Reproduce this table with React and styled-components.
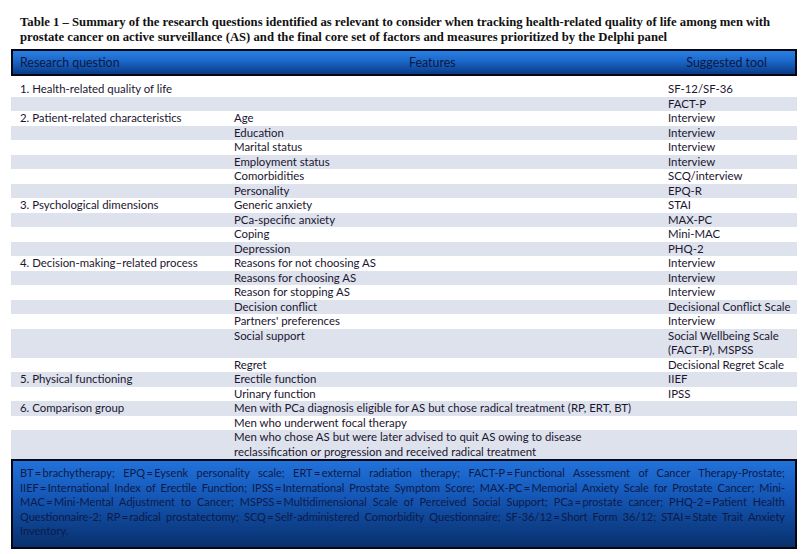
import styled, { createGlobalStyle } from "styled-components";

const GlobalStyle = createGlobalStyle`
  html, body {
    margin: 0;
    padding: 0;
    background: #ffffff;
  }
`;

const rows = [
  { q: "1. Health-related quality of life", f: "", t: "SF-12/SF-36" },
  { q: "", f: "", t: "FACT-P" },
  { q: "2. Patient-related characteristics", f: "Age", t: "Interview" },
  { q: "", f: "Education", t: "Interview" },
  { q: "", f: "Marital status", t: "Interview" },
  { q: "", f: "Employment status", t: "Interview" },
  { q: "", f: "Comorbidities", t: "SCQ/interview" },
  { q: "", f: "Personality", t: "EPQ-R" },
  { q: "3. Psychological dimensions", f: "Generic anxiety", t: "STAI" },
  { q: "", f: "PCa-specific anxiety", t: "MAX-PC" },
  { q: "", f: "Coping", t: "Mini-MAC" },
  { q: "", f: "Depression", t: "PHQ-2" },
  { q: "4. Decision-making–related process", f: "Reasons for not choosing AS", t: "Interview" },
  { q: "", f: "Reasons for choosing AS", t: "Interview" },
  { q: "", f: "Reason for stopping AS", t: "Interview" },
  { q: "", f: "Decision conflict", t: "Decisional Conflict Scale" },
  { q: "", f: "Partners' preferences", t: "Interview" },
  { q: "", f: "Social support", t: "Social Wellbeing Scale (FACT-P), MSPSS" },
  { q: "", f: "Regret", t: "Decisional Regret Scale" },
  { q: "5. Physical functioning", f: "Erectile function", t: "IIEF" },
  { q: "", f: "Urinary function", t: "IPSS" },
  { q: "6. Comparison group", f: "Men with PCa diagnosis eligible for AS but chose radical treatment (RP, ERT, BT)", t: "" },
  { q: "", f: "Men who underwent focal therapy", t: "" },
  {
    q: "",
    f: "Men who chose AS but were later advised to quit AS owing to disease reclassification or progression and received radical treatment",
    t: "",
  },
];

// footnote lines as broken in the printed table
const eq = "\u2009=\u2009";
const noteLines = [
  `BT${eq}brachytherapy; EPQ${eq}Eysenk personality scale; ERT${eq}external radiation therapy; FACT-P${eq}Functional Assessment of Cancer Therapy-Prostate;`,
  `IIEF${eq}International Index of Erectile Function; IPSS${eq}International Prostate Symptom Score; MAX-PC${eq}Memorial Anxiety Scale for Prostate Cancer; Mini-`,
  `MAC${eq}Mini-Mental Adjustment to Cancer; MSPSS${eq}Multidimensional Scale of Perceived Social Support; PCa${eq}prostate cancer; PHQ-2${eq}Patient Health`,
  `Questionnaire-2; RP${eq}radical prostatectomy; SCQ${eq}Self-administered Comorbidity Questionnaire; SF-36/12${eq}Short Form 36/12; STAI${eq}State Trait Anxiety`,
  "Inventory.",
];

const Page = styled.div`
  width: 806px;
  height: 554px;
  padding: 15px 9px 0 11px;
  box-sizing: border-box;
  font-family: "Lato", "Liberation Sans", sans-serif;
  color: #1b1530;
`;

const Title = styled.div`
  font-family: "Liberation Serif", serif;
  font-weight: bold;
  font-size: 12.7px;
  line-height: 14.5px;
  color: #111111;
  padding-left: 9px;
  margin-bottom: 5px;
  white-space: nowrap;
`;

const Table = styled.div`
  width: 786px;
`;

const Head = styled.div`
  display: grid;
  grid-template-columns: 396px 1fr auto;
  align-items: center;
  height: 27px;
  box-sizing: border-box;
  border: 2px solid #050814;
  background: linear-gradient(#2a80e2 0%, #1a66c8 45%, #0a3a86 100%);
  color: #0c1840;
  font-size: 12.4px;
`;

const HeadCell = styled.div`
  padding-left: ${(p) => p.$left || 0}px;
  padding-right: ${(p) => p.$right || 0}px;
`;

const Body = styled.div`
  padding-top: 6px;
`;

const Row = styled.div`
  display: grid;
  grid-template-columns: 222px 434px 130px;
  background: ${(p) => (p.$shade ? "#dde2ec" : "#ffffff")};
  font-size: 11.4px;
  line-height: 14.5px;
`;

const Cell = styled.div`
  padding-left: ${(p) => p.$pad}px;
  padding-right: ${(p) => p.$right || 4}px;
`;

const Note = styled.div`
  border: 2px solid #050814;
  background: linear-gradient(#2172da 0%, #1558b8 40%, #08306c 100%);
  color: #0c1a48;
  font-size: 11px;
  line-height: 14.5px;
  padding: 5px 10px 8px 7px;
`;

const NoteLine = styled.div`
  white-space: nowrap;
  text-align: ${(p) => (p.$last ? "left" : "justify")};
  text-align-last: ${(p) => (p.$last ? "left" : "justify")};
`;

export default function App() {
  return (
    <Page>
      <GlobalStyle />
      <Title>
        Table 1 – Summary of the research questions identified as relevant to consider when tracking health-related
        quality of life among men with
        <br />
        prostate cancer on active surveillance (AS) and the final core set of factors and measures prioritized by the
        Delphi panel
      </Title>
      <Table>
        <Head>
          <HeadCell $left={7}>Research question</HeadCell>
          <HeadCell>Features</HeadCell>
          <HeadCell $right={28}>Suggested tool</HeadCell>
        </Head>
        <Body>
          {rows.map((r, i) => (
            <Row key={i} $shade={i % 2 === 1}>
              <Cell $pad={9}>{r.q}</Cell>
              <Cell $pad={1} $right={20}>
                {r.f}
              </Cell>
              <Cell $pad={1}>{r.t}</Cell>
            </Row>
          ))}
        </Body>
        <Note>
          {noteLines.map((line, i) => (
            <NoteLine key={i} $last={i === noteLines.length - 1}>
              {line}
            </NoteLine>
          ))}
        </Note>
      </Table>
    </Page>
  );
}
